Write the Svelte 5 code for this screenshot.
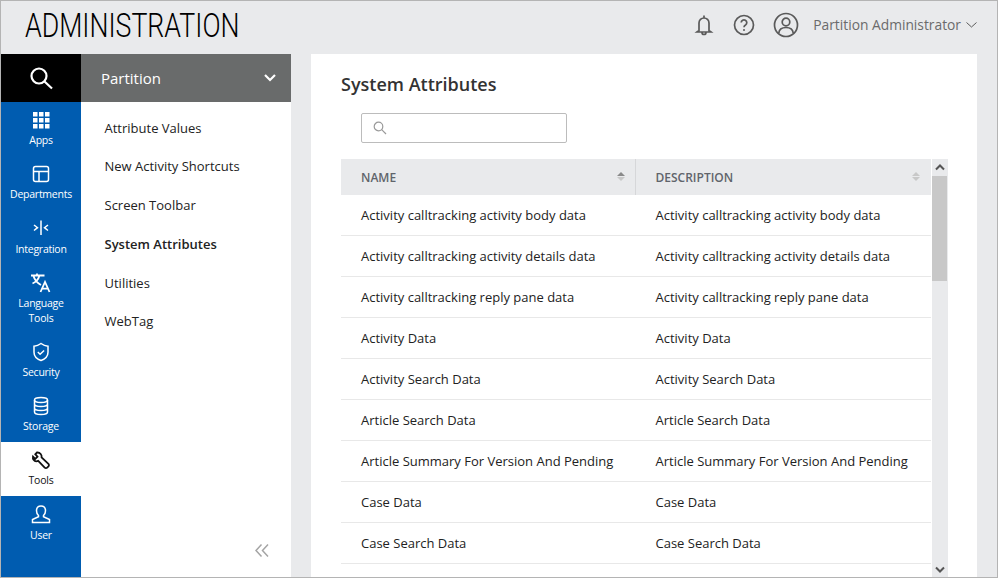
<script>
	const rail = [
		{ label: 'Apps', icon: 'apps' },
		{ label: 'Departments', icon: 'dept' },
		{ label: 'Integration', icon: 'integ' },
		{ label: 'Language Tools', icon: 'lang' },
		{ label: 'Security', icon: 'shield' },
		{ label: 'Storage', icon: 'db' },
		{ label: 'Tools', icon: 'wrench', active: true },
		{ label: 'User', icon: 'user' }
	];

	const links = ['Attribute Values', 'New Activity Shortcuts', 'Screen Toolbar', 'System Attributes', 'Utilities', 'WebTag'];

	const rows = [
		'Activity calltracking activity body data',
		'Activity calltracking activity details data',
		'Activity calltracking reply pane data',
		'Activity Data',
		'Activity Search Data',
		'Article Search Data',
		'Article Summary For Version And Pending',
		'Case Data',
		'Case Search Data'
	];
</script>

<div class="window">
	<header class="top">
		<h1 class="brand">ADMINISTRATION</h1>
		<div class="tools">
			<svg class="ic bell" viewBox="0 0 20 22" width="20" height="22"><path d="M5 16.500V9a5 5 0 0 1 10 0v7.500l2 1.500H3zM8 18.500a2 2 0 0 0 4 0M10 4V1.500" /></svg>
			<svg class="ic help" viewBox="0 0 22 22" width="22" height="22"><circle cx="11" cy="11" r="9.500" /><path d="M8.200 8.600a2.800 2.800 0 1 1 4.300 2.400c-1 .6-1.500 1.100-1.500 2.200" /><circle class="dot" cx="11" cy="16" r="1" /></svg>
			<svg class="ic me" viewBox="0 0 26 26" width="26" height="26"><circle cx="13" cy="13" r="11.500" /><circle cx="13" cy="10" r="3.800" /><path d="M5.800 21c.4-4 3-5.500 7.200-5.500s6.800 1.500 7.200 5.500" /></svg>
			<span class="who">Partition Administrator</span>
			<svg class="ic caret" viewBox="0 0 11 6" width="11" height="6"><path d="M.5.5 5.500 5l5-4.500" /></svg>
		</div>
	</header>

	<div class="body">
		<nav class="rail">
			<div class="search">
				<svg viewBox="0 0 24 24" width="24" height="24"><circle cx="10" cy="10" r="7.500" /><path d="m15.500 15.500 7.500 7" /></svg>
			</div>
			{#each rail as item}
				<div class="rail-item" class:active={item.active}>
					<svg viewBox="0 0 20 20" width="20" height="20">
						{#if item.icon === 'apps'}
							<g class="fill">
								{#each [2, 8, 14] as y}
									{#each [2, 8, 14] as x}
										<rect {x} {y} width="4.500" height="4.500" />
									{/each}
								{/each}
							</g>
						{:else if item.icon === 'dept'}
							<rect x="2.500" y="2.500" width="15" height="15" rx="2" />
							<path d="M2.500 7.500h15M8 7.500v10" />
						{:else if item.icon === 'integ'}
							<path d="M10 2.500v14.500M3 7l3.500 2.700L3 12.500M17 7l-3.500 2.700 3.500 2.800" />
						{:else if item.icon === 'lang'}
							<path class="heavy" d="M0 2.500h13.500M6 .5v2M1.500 10.500c3.500-1.500 6-4.500 7-8M2.500 3c1 3.500 4 7 7.500 9" />
							<path class="heavy" d="m9.500 19 4.500-10 4.500 10M11 15.700h6" />
						{:else if item.icon === 'shield'}
							<path d="M10 1.500c2.200 1.600 4.700 2.500 7 2.700v6c0 4-3 6.800-7 8.300-4-1.500-7-4.300-7-8.300v-6c2.300-.2 4.800-1.100 7-2.700z" />
							<path d="m6.800 10 2.300 2.200 4-3.700" />
						{:else if item.icon === 'db'}
							<ellipse cx="10" cy="4" rx="6.500" ry="2.500" />
							<path d="M3.500 4v12c0 1.400 2.900 2.500 6.500 2.500s6.500-1.100 6.500-2.500V4M3.500 8c0 1.400 2.900 2.500 6.500 2.500s6.500-1.100 6.500-2.500M3.500 12c0 1.400 2.900 2.500 6.500 2.500s6.500-1.100 6.500-2.500" />
						{:else if item.icon === 'wrench'}
							<path class="heavy" d="M6 2.500 4.300 4.200l2.200 2.400-2.300 2.300-2.200-2.300C1.500 9 3 11.300 5.200 11.300c.7 0 1.400-.1 2-.4l6.500 6.700c.7.700 1.800.7 2.500 0l1.200-1.200c.7-.7.7-1.800 0-2.500L10.600 7.500C11 5 9.300 2.300 6 2.500z" />
						{:else}
							<path d="M10 2c-2.700 0-4.500 2-4.500 4.800 0 2.100.9 3.700 2 4.700v1.300L1.500 15.500v3h17v-3l-6-2.700v-1.300c1.100-1 2-2.600 2-4.700C14.500 4 12.700 2 10 2z" />
						{/if}
					</svg>
					<span>{item.label}</span>
				</div>
			{/each}
		</nav>

		<aside class="sub">
			<div class="sub-head">
				<span>Partition</span>
				<svg viewBox="0 0 12 8" width="12" height="8"><path d="m1 1 5 5 5-5" /></svg>
			</div>
			<ul>
				{#each links as link}
					<li class:current={link === 'System Attributes'}>{link}</li>
				{/each}
			</ul>
			<svg class="collapse" viewBox="0 0 14 13" width="14" height="13"><path d="M6.500.5 1 6.500l5.500 6M13 .5l-5.500 6 5.500 6" /></svg>
		</aside>

		<main class="main">
			<h2>System Attributes</h2>
			<div class="filter">
				<svg viewBox="0 0 14 14" width="14" height="14"><circle cx="5.500" cy="5.500" r="4.300" /><path d="m8.700 8.700 4.300 4.300" /></svg>
			</div>
			<div class="grid-wrap">
				<div class="grid">
					<div class="row head">
						<div class="cell">NAME<i class="sort"></i></div>
						<div class="cell">DESCRIPTION<i class="sort dim"></i></div>
					</div>
					{#each rows as row}
						<div class="row">
							<div class="cell">{row}</div>
							<div class="cell">{row}</div>
						</div>
					{/each}
				</div>
				<div class="scrollbar">
					<svg class="up" viewBox="0 0 10 7" width="10" height="7"><path d="m1 5.500 4-4 4 4" /></svg>
					<div class="thumb"></div>
					<svg class="down" viewBox="0 0 10 7" width="10" height="7"><path d="m1 1.500 4 4 4-4" /></svg>
				</div>
			</div>
		</main>
	</div>
</div>

<style>
	:global(body) { margin: 0; }
	.window {
		box-sizing: border-box;
		width: 998px;
		height: 578px;
		display: flex;
		flex-direction: column;
		overflow: hidden;
		background: #e9eaec;
		border: 1px solid #b4b4b4;
		font-family: "Open Sans", sans-serif;
		color: #222;
	}
	svg { fill: none; stroke: currentColor; flex: none; display: block; }

	.top { height: 53px; flex: none; box-sizing: border-box; display: flex; align-items: center; justify-content: space-between; padding: 0 20px 6px 24px; }
	.brand {
		margin: 0;
		font: 300 34px/1 Roboto, "Liberation Sans", sans-serif;
		color: #000;
		transform: scaleX(.786);
		transform-origin: left center;
		white-space: nowrap;
	}
	.tools { display: flex; align-items: center; color: #5a5a5a; }
	.ic { stroke-width: 1.700; }
	.dot { fill: currentColor; stroke: none; }
	.help { margin-left: 19px; }
	.me { margin-left: 18px; }
	.who { margin-left: 14px; font-size: 13.800px; color: #6b6b6b; }
	.caret { margin-left: 5px; stroke-width: 1; margin-top: 1px; }

	.body { flex: 1; min-height: 0; display: flex; }

	.rail { width: 80px; flex: none; background: #005cb0; color: #fff; }
	.search { height: 48px; background: #000; display: flex; align-items: center; justify-content: center; }
	.search svg { stroke-width: 2.200; }
	.rail-item { padding: 8px 4px 8px; display: flex; flex-direction: column; align-items: center; text-align: center; }
	.rail-item svg { stroke-width: 1.500; }
	.rail-item .fill { fill: currentColor; stroke: none; }
	.rail-item .heavy { stroke-width: 1.800; }
	.rail-item span { margin-top: 3px; font-size: 10.500px; line-height: 15px; letter-spacing: -.25px; }
	.rail-item:nth-child(4) span, .rail-item:last-child span { margin-top: 4px; }
	.rail-item.active { background: #fff; color: #111; }

	.sub { width: 210px; flex: none; background: #fff; position: relative; }
	.sub-head { height: 48px; background: #696b6b; color: #fff; display: flex; align-items: center; justify-content: space-between; padding: 0 15px 0 20px; font-size: 15px; }
	.sub-head svg { stroke-width: 2.200; }
	ul { list-style: none; margin: 0; padding: 6.650px 0 0 23.500px; }
	li { height: 38.750px; line-height: 38.750px; font-size: 13px; color: #222; }
	li.current { font-weight: 600; }
	.collapse { position: absolute; right: 22px; bottom: 20px; color: #a5a5a5; stroke-width: 1.500; }

	.main { margin-left: 20px; width: 666px; flex: none; background: #fff; padding: 0 0 0 30px; box-sizing: border-box; overflow: hidden; }
	h2 { margin: 18px 0 0; font-size: 18px; line-height: 25px; font-weight: 600; color: #333; }
	.filter { box-sizing: border-box; width: 206px; height: 30px; margin: 16px 0 0 20px; border: 1px solid #bcbcbc; border-radius: 2px; padding: 7px 0 0 11px; color: #9a9a9a; }
	.filter svg { stroke-width: 1.200; }

	.grid-wrap { display: flex; margin-top: 16px; height: 418px; }
	.grid { width: 590px; flex: none; overflow: hidden; }
	.row { display: flex; height: 41px; box-sizing: border-box; border-bottom: 1px solid #e8e8e8; }
	.row.head { height: 36px; background: #e9eaec; border: 0; }
	.cell { width: 295px; flex: none; box-sizing: border-box; padding: 0 0 0 20px; display: flex; align-items: center; font-size: 13px; color: #222; white-space: nowrap; position: relative; }
	.cell + .cell { padding-left: 19.500px; }
	.head .cell { font-size: 12px; font-weight: 600; color: #60646b; }
	.head .cell:first-child { border-right: 1px solid #d6d7d9; }
	.sort { position: absolute; right: 10px; top: 13px; width: 0; height: 0; border-left: 4px solid transparent; border-right: 4px solid transparent; border-bottom: 4px solid #8a8a8a; }
	.sort::after { content: ''; position: absolute; left: -4px; top: 5px; border-left: 4px solid transparent; border-right: 4px solid transparent; border-top: 4px solid #c8c8c8; }
	.sort.dim { border-bottom-color: #c8c8c8; right: 11px; }

	.scrollbar { width: 16px; margin-left: 1px; flex: none; background: #e9eaec; display: flex; flex-direction: column; align-items: center; color: #555; }
	.scrollbar svg { stroke-width: 2; }
	.up { margin: 5px 0 5px; }
	.thumb { width: 15px; align-self: flex-start; height: 105px; background: #c8c8c8; }
	.down { margin: auto 0 4px; }
</style>
